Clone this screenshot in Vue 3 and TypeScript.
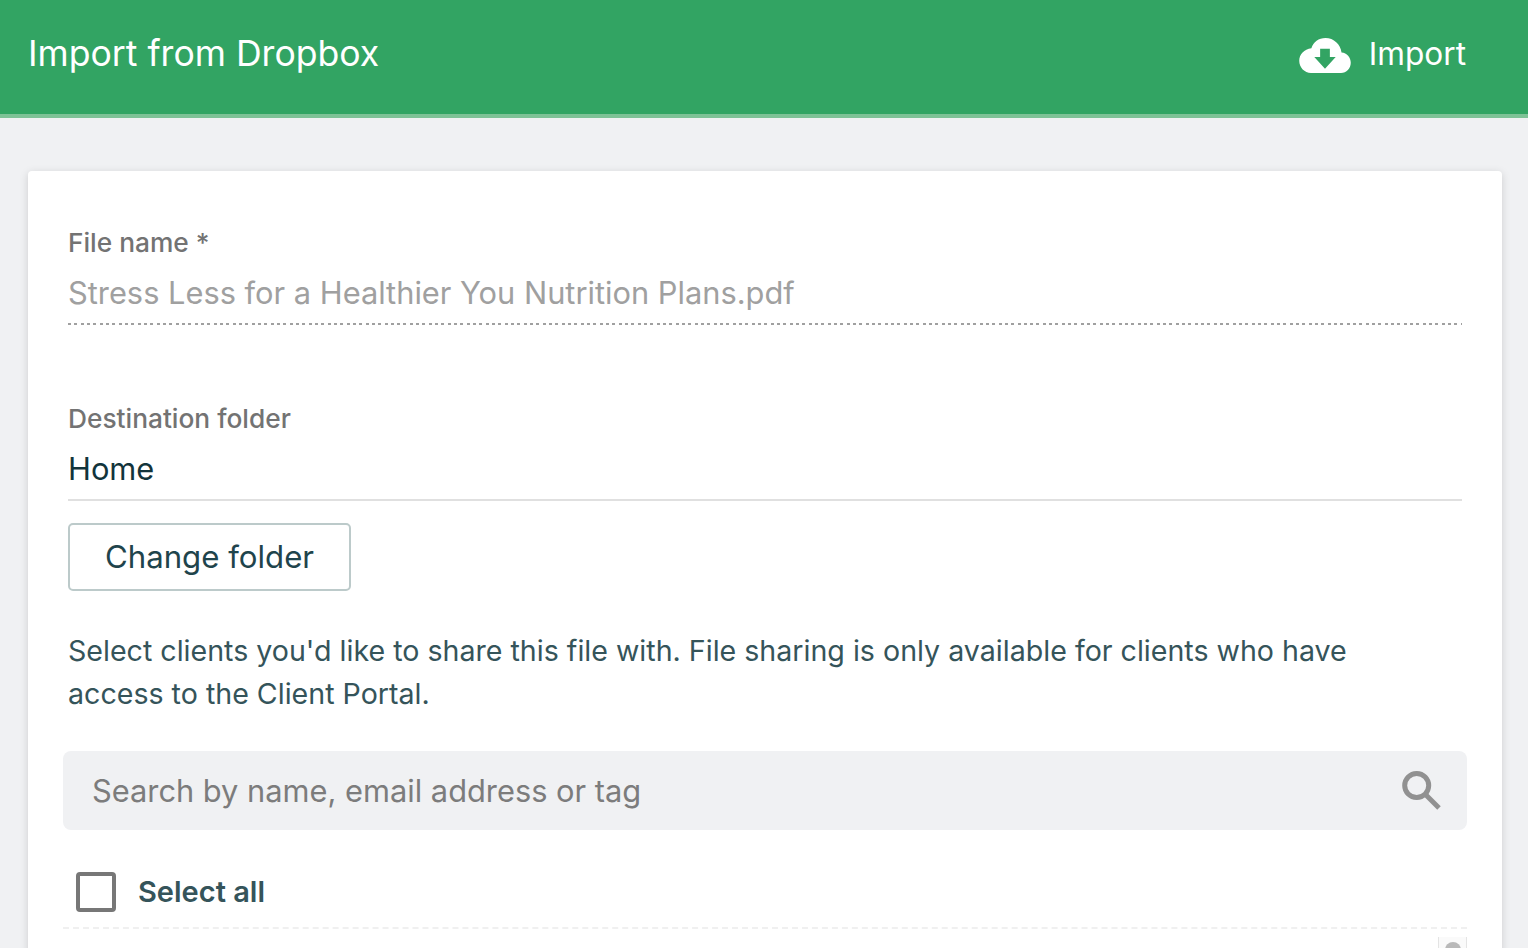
<script setup lang="ts">
const fileName = 'Stress Less for a Healthier You Nutrition Plans.pdf'
</script>

<template>
  <div class="page">
    <header class="topbar">
      <h1>Import from Dropbox</h1>
      <button class="import" type="button">
        <svg width="52" height="35" viewBox="0 0 53 36" aria-hidden="true">
          <path class="cloud" d="M27 0C20 0 14.500 4 12.500 10.500 5 11.500 0 16.500 0 23.500 0 30.500 5.500 36 12 36H43C48.500 36 53 31.500 53 25.500 53 20 49 15.500 43.500 15 42.500 6.500 35.500 0 27 0Z" />
          <path class="arrow" d="M21.500 11H31.500V19.500H37.500L26.500 31.500 15.500 19.500H21.500Z" />
        </svg>
        <span>Import</span>
      </button>
    </header>

    <main class="content">
      <section class="card">
        <div class="field">
          <label>File name *</label>
          <div class="value readonly">{{ fileName }}</div>
        </div>

        <div class="field second">
          <label>Destination folder</label>
          <div class="value folder">Home</div>
        </div>

        <button class="change" type="button">Change folder</button>

        <p class="hint">
          Select clients you'd like to share this file with. File sharing is only available for clients who have
          access to the Client Portal.
        </p>

        <div class="search">
          <span>Search by name, email address or tag</span>
          <svg width="40" height="40" viewBox="0 0 40 40" aria-hidden="true">
            <circle cx="15.700" cy="14.500" r="12" />
            <path d="M24.500 23.500 38 37" />
          </svg>
        </div>

        <div class="select-all">
          <span class="box"></span>
          <strong>Select all</strong>
        </div>

        <div class="list">
          <div class="scroll-thumb"><i></i></div>
        </div>
      </section>
    </main>
  </div>
</template>

<style>
html,
body {
  margin: 0;
  height: 100%;
  overflow: hidden;
}
</style>

<style scoped>
.page {
  height: 948px;
  overflow: hidden;
  background: #f0f1f3;
  font-family: Inter, 'Noto Sans', sans-serif;
}

.topbar {
  box-sizing: border-box;
  height: 118px;
  padding: 0 62px 8px 28px;
  display: flex;
  align-items: center;
  justify-content: space-between;
  background: #32a463;
  border-bottom: 4px solid #7ec296;
  color: #fff;
}

h1 {
  margin: 0;
  font-size: 35.6px;
  font-weight: 400;
}

.import {
  display: flex;
  align-items: center;
  gap: 18px;
  padding: 0;
  border: 0;
  background: none;
  color: #fff;
  font: inherit;
  font-size: 31.600px;
}

.import svg {
  margin-top: 4px;
}

.cloud {
  fill: #fff;
}

.arrow {
  fill: #32a463;
}

.content {
  padding: 53px 26px 0 28px;
}

.card {
  box-sizing: border-box;
  height: 900px;
  padding: 56px 40px 0;
  background: #fff;
  border-radius: 4px;
  box-shadow: 0 2px 8px rgba(0, 0, 0, 0.15);
}

.field label {
  display: block;
  font-size: 26.300px;
  font-weight: 500;
  line-height: 32px;
  color: #737373;
}

.value {
  box-sizing: border-box;
  height: 57px;
  margin-top: 9px;
  font-size: 30.800px;
  line-height: 50px;
}

.readonly {
  color: #a0a0a0;
  background: repeating-linear-gradient(90deg, #a0a0a0 0 3px, transparent 3px 6.33px) left bottom / 100% 2px no-repeat;
}

.second {
  margin-top: 78px;
}

.folder {
  color: #12343b;
  border-bottom: 2px solid #e0e0e0;
}

.change {
  display: block;
  box-sizing: border-box;
  width: 283px;
  height: 68px;
  margin-top: 22px;
  padding: 0 0 1px;
  background: #fff;
  border: 2px solid #bccaca;
  border-radius: 5px;
  color: #1f444c;
  font: inherit;
  font-size: 31.200px;
}

.hint {
  margin: 38px 0 0;
  padding-right: 90px;
  font-size: 28.600px;
  line-height: 43px;
  color: #35545a;
}

.search {
  box-sizing: border-box;
  height: 79px;
  margin: 36px -5px 0;
  padding: 0 26px 0 29px;
  display: flex;
  align-items: center;
  justify-content: space-between;
  background: #f0f1f3;
  border-radius: 8px;
  font-size: 30.800px;
  color: #7c7c7c;
}

.search circle,
.search path {
  fill: none;
  stroke: #919191;
  stroke-width: 5;
}

.select-all {
  box-sizing: border-box;
  height: 99px;
  margin: 0 -5px;
  padding: 26px 0 0 13px;
  display: flex;
  align-items: center;
  gap: 22px;
  border-bottom: 2px dashed #f0f0f0;
  color: #35545a;
  font-size: 29px;
}

.select-all strong {
  font-weight: 600;
}

.box {
  box-sizing: border-box;
  width: 40px;
  height: 40px;
  border: 4px solid #777;
  border-radius: 4px;
}

.list {
  display: flex;
  justify-content: flex-end;
  padding-top: 8px;
  margin-right: -5px;
}

.scroll-thumb {
  box-sizing: border-box;
  width: 29px;
  height: 40px;
  background: #fafafa;
  border: 1px solid #e4e4e4;
  border-width: 0 1px;
  display: flex;
  justify-content: center;
}

.scroll-thumb i {
  width: 16px;
  height: 16px;
  margin-top: 5px;
  border-radius: 50%;
  background: #b9b9b9;
}
</style>
